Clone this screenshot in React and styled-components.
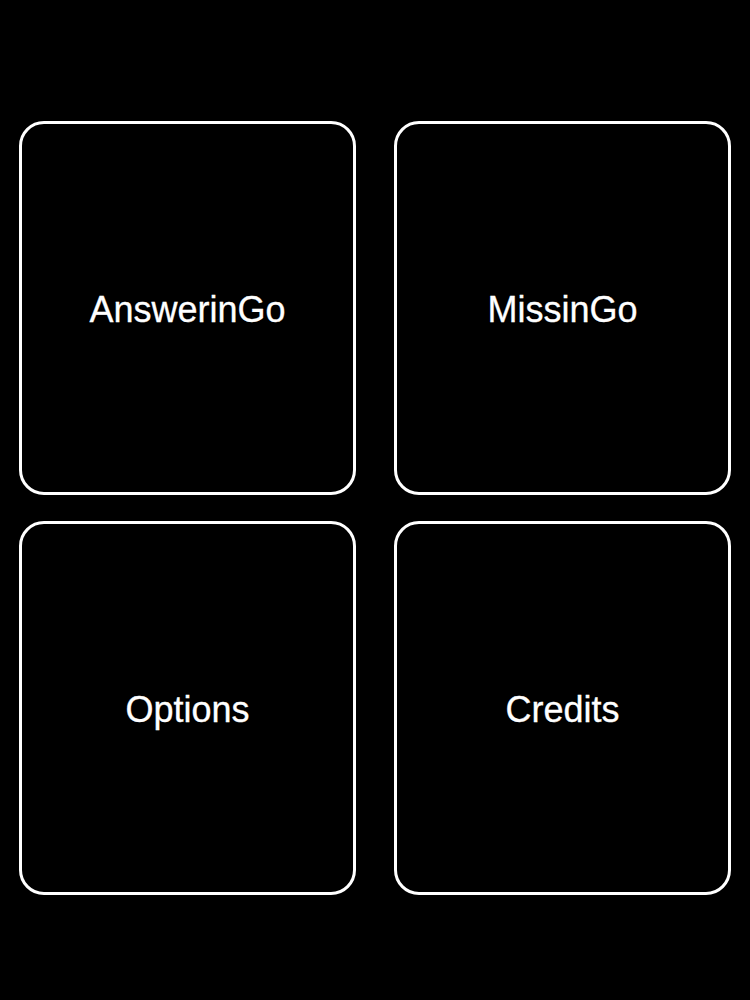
import React from 'react';
import styled, { createGlobalStyle } from 'styled-components';

const GlobalStyle = createGlobalStyle`
    html, body {
        margin: 0;
        padding: 0;
        background: #000;
    }
    * {
        box-sizing: border-box;
    }
`;

const Screen = styled.div`
    width: 750px;
    height: 1000px;
    background: #000;
    padding: 121px 19px 0;
    display: grid;
    grid-template-columns: 337px 337px;
    grid-auto-rows: 374px;
    column-gap: 38px;
    row-gap: 26px;
    align-content: start;
`;

const Tile = styled.button`
    display: flex;
    align-items: center;
    justify-content: center;
    background: #000;
    border: 3px solid #fff;
    border-radius: 25px;
    color: #fff;
    font-family: "Liberation Sans", Arial, sans-serif;
    font-size: 36px;
    padding: 3px 0 0;
    cursor: pointer;
    -webkit-text-stroke: 0.3px #fff;
`;

const items = ['AnswerinGo', 'MissinGo', 'Options', 'Credits'];

export default function App() {
    return (
        <>
            <GlobalStyle />
            <Screen>
                {items.map((label) => (
                    <Tile key={label}>{label}</Tile>
                ))}
            </Screen>
        </>
    );
}
